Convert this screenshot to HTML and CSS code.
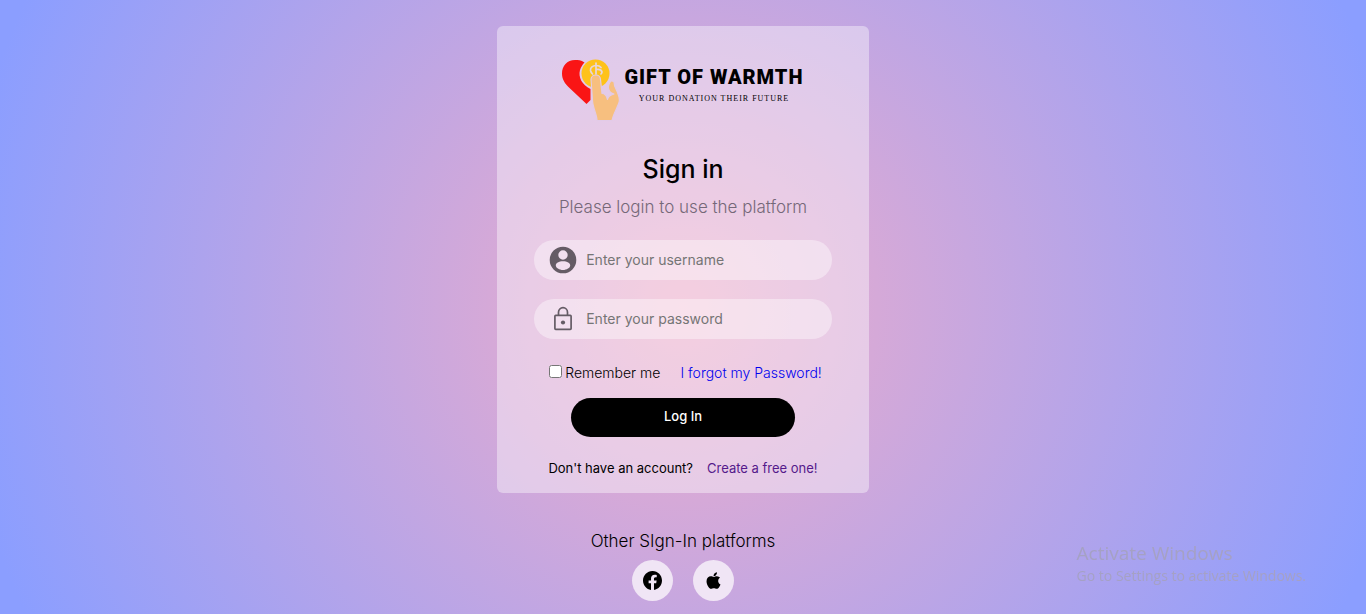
FILE: index.html
```html
<!DOCTYPE html>
<html lang="en">
<head>
<meta charset="utf-8">
<meta name="viewport" content="width=device-width, initial-scale=1">
<title>Gift of Warmth - Sign in</title>
<link rel="stylesheet" href="styles.css">
</head>
<body>
<main class="page">
  <form class="card">
    <div class="brand">
      <svg class="brand-mark" viewBox="0 0 58 62" aria-hidden="true">
        <path fill="#fa1515" d="M22.500 3.500C19 1 16 1 13 1 5 1 0 7 0 14.500c0 6 3 10 7 14L24.500 45l4-4V30C20 26 16 18 18 11c1-3 2.500-5.500 4.500-7.500z"/>
        <circle cx="33.500" cy="14.500" r="14" fill="#fec21a"/>
        <path fill="none" stroke="#e8d6da" stroke-width="1.700" stroke-linecap="round" stroke-linejoin="round" d="M34 4v11M39 8.500C38 7 36 6.500 34 6.500c-3 0-6 2-5.500 5 .3 1.500 1 2.500 2 3.500M34 10.500c3-.5 5.500.5 6 2.500 0 1-.5 1.500-1 2"/>
        <path fill="#f7bf7f" stroke="#e2cbe7" stroke-width="1.200" stroke-linejoin="round" d="M29 20.500c0-6 9.500-6 9.500 0L40 34.500c3 0 4.500 2 5.500 6 .5-3 3-4.500 6.500-5.500-4-1-6-4-5.500-8 .5-2.500 1.500-4.500 3-5.500l2.500 1.500c0 4 1.500 6 3.500 10.500 1.500 3.500 2.500 7 1.500 10-2 6-5.500 11-7 18H35c0-6-4-12-4.500-20z"/>
      </svg>
      <div class="brand-text">
        <div class="brand-name">GIFT OF WARMTH</div>
        <div class="brand-tag">YOUR DONATION THEIR FUTURE</div>
      </div>
    </div>
    <h1 class="title">Sign in</h1>
    <p class="subtitle">Please login to use the platform</p>
    <div class="fields">
      <label class="field">
        <svg class="field-icon" viewBox="0 0 28 28" role="img" aria-label="Username">
          <path fill="#655c65" fill-rule="evenodd" d="M14 .7a13.300 13.300 0 1 0 0 26.600A13.300 13.300 0 0 0 14 .7zM14 4.300a4.700 4.700 0 1 1 0 9.400 4.700 4.700 0 0 1 0-9.400zM14 15.300c4.200 0 7.200 1.800 7.200 4.200 0 2.200-3.500 4.500-7.200 4.500s-7.200-2.300-7.200-4.500c0-2.400 3-4.200 7.200-4.200z"/>
        </svg>
        <input class="field-input" type="text" placeholder="Enter your username">
      </label>
      <label class="field">
        <svg class="field-icon" viewBox="0 0 28 28" role="img" aria-label="Password">
          <g fill="none" stroke="#655c65" stroke-width="1.700">
            <rect x="5.900" y="10.400" width="16.200" height="14" rx=".8"/>
            <path d="M9.500 10V7.200a4.500 4.500 0 0 1 9 0V10"/>
          </g>
          <circle cx="14" cy="17.500" r="2.100" fill="#655c65"/>
        </svg>
        <input class="field-input" type="password" placeholder="Enter your password">
      </label>
    </div>
    <div class="options">
      <label class="remember"><input class="tick" type="checkbox">Remember me</label>
      <a class="forgot" href="#forgot">I forgot my Password!</a>
    </div>
    <button class="login" type="submit">Log In</button>
    <p class="signup"><span>Don't have an account?</span><a class="create" href="#create">Create a free one!</a></p>
  </form>
  <section class="others">
    <p class="others-title">Other SIgn-In platforms</p>
    <div class="platforms">
      <button class="platform" type="button" aria-label="Facebook">
        <svg viewBox="0 0 16 16" aria-hidden="true"><path d="M16 8.049c0-4.446-3.582-8.050-8-8.050C3.580 0-.002 3.603-.002 8.050c0 4.017 2.926 7.347 6.750 7.951v-5.625h-2.030V8.050H6.750V6.275c0-2.017 1.195-3.131 3.022-3.131.876 0 1.791.157 1.791.157v1.980h-1.009c-.993 0-1.303.621-1.303 1.258v1.510h2.218l-.354 2.326H9.250V16c3.824-.604 6.750-3.934 6.750-7.951"/></svg>
      </button>
      <button class="platform" type="button" aria-label="Apple">
        <svg class="apple" viewBox="0 0 384 512" aria-hidden="true"><path d="M318.700 268.700c-.2-36.700 16.400-64.400 50-84.800-18.800-26.900-47.200-41.700-84.700-44.600-35.500-2.800-74.300 20.700-88.500 20.700-15 0-49.400-19.700-76.400-19.700C63.300 141.200 4 184.800 4 273.500q0 39.300 14.400 81.200c12.800 36.700 59 126.700 107.200 125.200 25.200-.6 43-17.900 75.800-17.900 31.800 0 48.300 17.900 76.400 17.900 48.600-.7 90.400-82.500 102.600-119.300-65.200-30.700-61.700-90-61.700-91.900zm-56.600-164.200c27.300-32.400 24.800-61.900 24-72.500-24.100 1.400-52 16.400-67.900 34.900-17.500 19.800-27.800 44.300-25.600 71.900 26.100 2 49.900-11.400 69.500-34.300z"/></svg>
      </button>
    </div>
  </section>
</main>
<aside class="watermark">
  <div class="watermark-title">Activate Windows</div>
  <div class="watermark-text">Go to Settings to activate Windows.</div>
</aside>
</body>
</html>
```

FILE: styles.css
```css
* {
  box-sizing: border-box;
}

body {
  margin: 0;
  min-height: 100vh;
  font-family: Inter, "Open Sans", sans-serif;
  font-weight: 300;
  color: #000;
  background: radial-gradient(circle, #eeaeca 0%, #d5a9d8 26%, #8b9eff 97%);
}

h1, p {
  margin: 0;
}

.page {
  display: flex;
  flex-direction: column;
  align-items: center;
  padding: 26px 16px 12px;
}

.card {
  display: flex;
  flex-direction: column;
  align-items: center;
  width: 100%;
  max-width: 372px;
  padding: 33px 0 15px;
  border-radius: 6px;
  background: rgba(255, 255, 255, 0.4);
}

.brand {
  display: flex;
  gap: 4px;
}

.brand-mark {
  width: 58px;
  height: 62px;
}

.brand-text {
  padding-top: 6px;
  text-align: center;
}

.brand-name {
  font-family: Roboto, sans-serif;
  font-size: 20px;
  line-height: 24px;
  font-weight: 900;
  letter-spacing: 1px;
  white-space: nowrap;
}

.brand-tag {
  padding-top: 4px;
  font: 8px/12px "Liberation Serif", serif;
  letter-spacing: 1px;
}

.title {
  margin-top: 30px;
  font-size: 25px;
  line-height: 36px;
  font-weight: 500;
}

.subtitle {
  margin-top: 8px;
  font-size: 17px;
  line-height: 24px;
  color: #756878;
}

.fields {
  display: grid;
  gap: 19px;
  width: 80%;
  margin-top: 21px;
}

.field {
  display: flex;
  align-items: center;
  gap: 9px;
  height: 40px;
  padding: 0 15px;
  border-radius: 20px;
  background: rgba(255, 255, 255, 0.4);
}

.field-icon {
  flex: none;
  width: 28px;
  height: 28px;
}

.field-input {
  flex: 1;
  min-width: 0;
  padding: 0 0 2px;
  border: 0;
  outline: 0;
  background: none;
  font: inherit;
  font-size: 14px;
  font-weight: 400;
}

.field-input::placeholder {
  color: #757575;
}

.options {
  display: flex;
  justify-content: space-between;
  width: 80%;
  margin-top: 24px;
  padding: 0 10px 0 15px;
  font-size: 14px;
  line-height: 20px;
}

.remember {
  display: flex;
  gap: 3px;
}

.tick {
  width: 13px;
  height: 13px;
  margin: 2px 0 0;
}

a {
  text-decoration: none;
}

.forgot {
  color: #0000ee;
}

.login {
  width: 60%;
  height: 39px;
  margin-top: 15px;
  padding: 0 0 3px;
  border: 0;
  border-radius: 20px;
  background: #000;
  color: #fff;
  font: inherit;
  font-size: 13px;
  font-weight: 500;
}

.signup {
  display: flex;
  gap: 14px;
  margin-top: 21px;
  font-size: 13px;
  font-weight: 400;
  line-height: 20px;
}

.create {
  color: #551a8b;
}

.others {
  margin-top: 36px;
  text-align: center;
}

.others-title {
  font-size: 17px;
  line-height: 24px;
}

.platforms {
  display: flex;
  justify-content: center;
  gap: 20px;
  margin-top: 7px;
}

.platform {
  display: grid;
  place-items: center;
  width: 41px;
  height: 41px;
  padding: 0;
  border: 0;
  border-radius: 50%;
  background: #f0e5f5;
}

.platform svg {
  width: 19px;
  height: 19px;
}

.platform .apple {
  width: 15px;
}

.watermark {
  position: fixed;
  right: 60px;
  bottom: 28px;
  font-family: "Open Sans", sans-serif;
  font-weight: 400;
  color: #a5a1c4;
}

.watermark-title {
  font-size: 19px;
  line-height: 26px;
}

.watermark-text {
  font-size: 14px;
  line-height: 20px;
}
```
